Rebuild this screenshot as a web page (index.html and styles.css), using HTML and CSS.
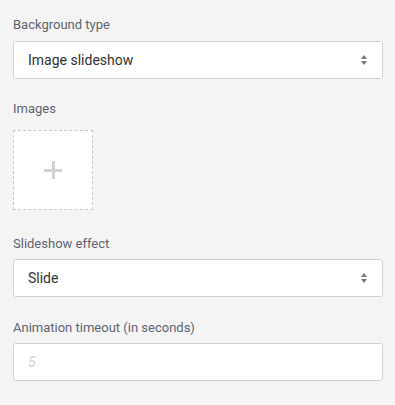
FILE: index.html
```html
<!DOCTYPE html>
<html>
<head>
<meta charset="utf-8">
<link rel="stylesheet" href="styles.css">
</head>
<body>
<div class="form">
  <div class="group g-bg">
    <label class="label">Background type</label>
    <div class="select">
      <span class="value">Image slideshow</span>
      <span class="arrows"><span class="up"></span><span class="down"></span></span>
    </div>
  </div>
  <div class="group g-images">
    <label class="label">Images</label>
    <div class="add-box"><span class="plus"></span></div>
  </div>
  <div class="group g-effect">
    <label class="label">Slideshow effect</label>
    <div class="select">
      <span class="value">Slide</span>
      <span class="arrows"><span class="up"></span><span class="down"></span></span>
    </div>
  </div>
  <div class="group g-timeout">
    <label class="label">Animation timeout (in seconds)</label>
    <div class="input"><span class="placeholder">5</span></div>
  </div>
</div>
</body>
</html>
```

FILE: styles.css
```css
html, body {
  margin: 0;
  padding: 0;
  background: #f4f4f4;
}
body {
  font-family: Roboto, "Liberation Sans", sans-serif;
  width: 395px;
  height: 405px;
  overflow: hidden;
}
.form {
  padding: 17px 12px 0 13px;
  display: flex;
  flex-direction: column;
}
.group {
  display: flex;
  flex-direction: column;
}
.label {
  display: block;
  font-size: 13px;
  line-height: 16px;
  color: #5e6470;
  margin-bottom: 8px;
}
.g-bg { margin-bottom: 22px; }
.g-images { margin-bottom: 26px; }
.g-images .label { margin-bottom: 13px; }
.g-effect { margin-bottom: 23px; }
.g-effect .label, .g-timeout .label { margin-bottom: 7px; }
.select, .input {
  box-sizing: border-box;
  height: 38px;
  width: 370px;
  background: #fff;
  border: 1px solid #d2d2d2;
  border-radius: 3px;
  display: flex;
  align-items: center;
  padding: 0 14px;
  justify-content: space-between;
}
.value {
  font-size: 14px;
  color: #333;
}
.arrows {
  display: flex;
  flex-direction: column;
  gap: 2px;
  margin-right: 1px;
}
.up {
  width: 0; height: 0;
  border-left: 3.5px solid transparent;
  border-right: 3.5px solid transparent;
  border-bottom: 4px solid #777;
}
.down {
  width: 0; height: 0;
  border-left: 3.5px solid transparent;
  border-right: 3.5px solid transparent;
  border-top: 4px solid #777;
}
.placeholder {
  font-size: 14px;
  font-style: italic;
  font-weight: 500;
  color: #d8d8d8;
}
.add-box {
  box-sizing: border-box;
  width: 80px;
  height: 80px;
  background: #fff;
  border: 1px dashed #c8c8c8;
  display: flex;
  align-items: center;
  justify-content: center;
}
.plus {
  position: relative;
  width: 18px;
  height: 18px;
}
.plus::before, .plus::after {
  content: "";
  position: absolute;
  background: #d2d2d2;
}
.plus::before {
  left: 0; right: 0; top: 7.5px; height: 3px;
}
.plus::after {
  top: 0; bottom: 0; left: 7.5px; width: 3px;
}
```
